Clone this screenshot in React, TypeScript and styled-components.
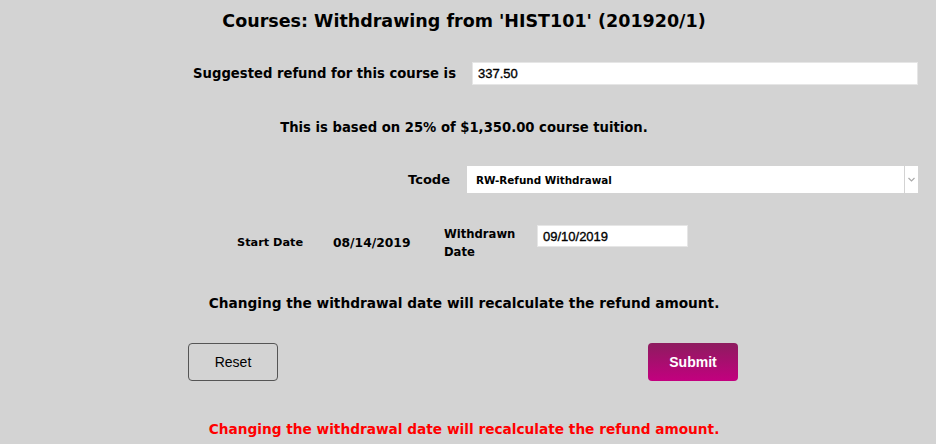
import React from "react";
import styled, { createGlobalStyle } from "styled-components";

const Global = createGlobalStyle`
  html, body { margin: 0; padding: 0; background: #d3d3d3; }
  body { width: 936px; height: 444px; overflow: hidden; }
`;

const HEAD = `"DejaVu Sans", "Liberation Sans", sans-serif`;
const BODY = `"Liberation Sans", Arial, sans-serif`;

const Page = styled.div`
  width: 936px;
  height: 444px;
  background: #d3d3d3;
  display: flex;
  flex-direction: column;
  color: #000;
  font-family: ${HEAD};
  font-weight: bold;
  & > * { flex-shrink: 0; }
`;

const Title = styled.h1`
  margin: 0;
  height: 40px;
  line-height: 42px;
  padding-right: 8px;
  font-size: 17.5px;
  text-align: center;
  font-weight: bold;
`;

const FieldRow = styled.div<{ $h: number }>`
  height: ${(p) => p.$h}px;
  display: flex;
  align-items: center;
  justify-content: flex-end;
  padding-right: 18px;
`;

const Label = styled.label<{ $size: number; $gap: number }>`
  font-size: ${(p) => p.$size}px;
  margin-right: ${(p) => p.$gap}px;
  white-space: nowrap;
`;

const TextBox = styled.div<{ $w: number; $h: number }>`
  box-sizing: border-box;
  width: ${(p) => p.$w}px;
  height: ${(p) => p.$h}px;
  background: #fff;
  border: 1px solid #e6e6e6;
  font-family: ${BODY};
  font-weight: normal;
  font-size: 13px;
  display: flex;
  align-items: center;
  padding-left: 5px;
  -webkit-text-stroke: 0.35px #000;
`;

const Info = styled.p<{ $h: number; $size: number; $mt?: number; $color?: string }>`
  margin: ${(p) => p.$mt ?? 0}px 0 0;
  height: ${(p) => p.$h}px;
  padding-right: 8px;
  display: flex;
  align-items: center;
  justify-content: center;
  font-size: ${(p) => p.$size}px;
  color: ${(p) => p.$color ?? "#000"};
`;

const SelectBox = styled.div`
  box-sizing: border-box;
  width: 451px;
  height: 27px;
  background: #fff;
  display: flex;
  align-items: stretch;
`;

const SelectText = styled.span`
  flex: 1;
  display: flex;
  align-items: center;
  padding-left: 9px;
  font-size: 10.4px;
`;

const ArrowCell = styled.span`
  width: 13px;
  border-left: 1px solid #d3d3d3;
  display: flex;
  align-items: center;
  justify-content: center;
`;

const DateRow = styled.div`
  margin-top: 13px;
  height: 60px;
  display: flex;
  align-items: flex-start;
  padding-left: 237px;
`;

const DateLabel = styled.span<{ $w: number; $top: number; $size: number }>`
  width: ${(p) => p.$w}px;
  margin-top: ${(p) => p.$top}px;
  font-size: ${(p) => p.$size}px;
  line-height: 18px;
`;

const ButtonRow = styled.div`
  height: 38px;
  margin-top: 22px;
  display: flex;
  justify-content: space-between;
  align-items: flex-start;
  width: 550px;
  padding-left: 188px;
`;

const Button = styled.button<{ $primary?: boolean }>`
  box-sizing: border-box;
  width: 90px;
  height: 38px;
  border-radius: 4px;
  font-family: ${BODY};
  font-size: 14px;
  cursor: pointer;
  border: ${(p) => (p.$primary ? "none" : "1px solid #555")};
  background: ${(p) =>
    p.$primary ? "linear-gradient(#8d1c5f, #c3007f)" : "transparent"};
  color: ${(p) => (p.$primary ? "#fff" : "#000")};
  font-weight: ${(p) => (p.$primary ? "bold" : "normal")};
`;

export default function App() {
  return (
    <Page>
      <Global />
      <Title>Courses: Withdrawing from 'HIST101' (201920/1)</Title>
      <FieldRow $h={67}>
        <Label $size={13.2} $gap={16}>Suggested refund for this course is</Label>
        <TextBox $w={446} $h={23}>337.50</TextBox>
      </FieldRow>
      <Info $h={40} $size={13.2}>This is based on 25% of $1,350.00 course tuition.</Info>
      <FieldRow $h={65}>
        <Label $size={13} $gap={17}>Tcode</Label>
        <SelectBox>
          <SelectText>RW-Refund Withdrawal</SelectText>
          <ArrowCell>
            <svg width="7" height="5" viewBox="0 0 7 5">
              <path d="M0.5 1 L3.5 4 L6.5 1" fill="none" stroke="#aaa" strokeWidth="1.2" />
            </svg>
          </ArrowCell>
        </SelectBox>
      </FieldRow>
      <DateRow>
        <DateLabel $w={96} $top={9} $size={11.3}>Start Date</DateLabel>
        <DateLabel $w={111} $top={9} $size={12.3}>08/14/2019</DateLabel>
        <DateLabel $w={93} $top={0} $size={11.6}>
          Withdrawn
          <br />
          Date
        </DateLabel>
        <TextBox $w={151} $h={22}>09/10/2019</TextBox>
      </DateRow>
      <Info $h={36} $size={13.7}>
        Changing the withdrawal date will recalculate the refund amount.
      </Info>
      <ButtonRow>
        <Button>Reset</Button>
        <Button $primary>Submit</Button>
      </ButtonRow>
      <Info $h={48} $mt={24} $size={13.7} $color="#ff0000">
        Changing the withdrawal date will recalculate the refund amount.
      </Info>
    </Page>
  );
}
